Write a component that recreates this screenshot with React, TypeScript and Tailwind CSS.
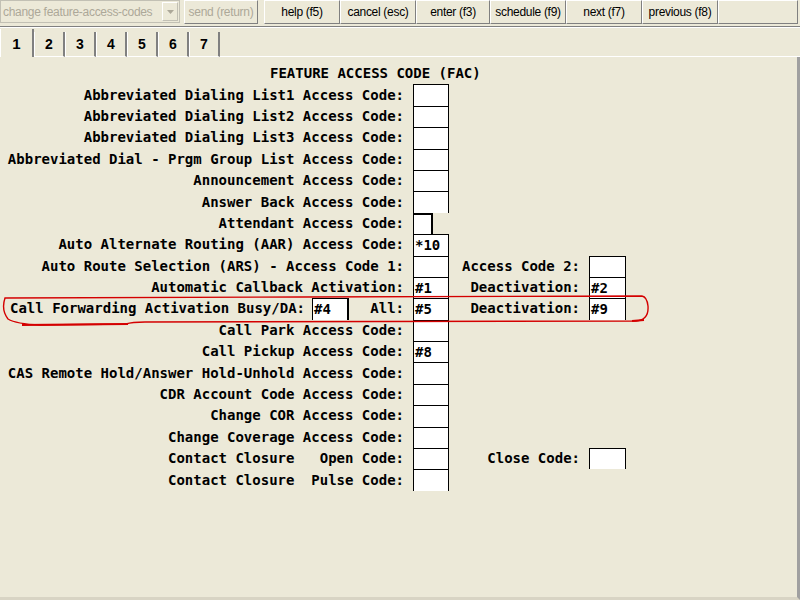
import React from 'react';

type Row = {
  label: string;
  value?: string;
  narrow?: boolean;
  label2?: string;
  value2?: string;
  split?: { left: string; leftValue: string; right: string };
};

const rows: Row[] = [
  { label: 'Abbreviated Dialing List1 Access Code:' },
  { label: 'Abbreviated Dialing List2 Access Code:' },
  { label: 'Abbreviated Dialing List3 Access Code:' },
  { label: 'Abbreviated Dial - Prgm Group List Access Code:' },
  { label: 'Announcement Access Code:' },
  { label: 'Answer Back Access Code:' },
  { label: 'Attendant Access Code:', narrow: true },
  { label: 'Auto Alternate Routing (AAR) Access Code:', value: '*10' },
  { label: 'Auto Route Selection (ARS) - Access Code 1:', label2: 'Access Code 2:', value2: '' },
  { label: 'Automatic Callback Activation:', value: '#1', label2: 'Deactivation:', value2: '#2' },
  {
    label: '',
    value: '#5',
    split: { left: 'Call Forwarding Activation Busy/DA:', leftValue: '#4', right: 'All:' },
    label2: 'Deactivation:',
    value2: '#9',
  },
  { label: 'Call Park Access Code:' },
  { label: 'Call Pickup Access Code:', value: '#8' },
  { label: 'CAS Remote Hold/Answer Hold-Unhold Access Code:' },
  { label: 'CDR Account Code Access Code:' },
  { label: 'Change COR Access Code:' },
  { label: 'Change Coverage Access Code:' },
  { label: 'Contact Closure   Open Code:', label2: 'Close Code:', value2: '' },
  { label: 'Contact Closure  Pulse Code:' },
];

const Field = ({ value = '', className = '' }: { value?: string; className?: string }) => (
  <div
    className={`h-full bg-white border-t border-l border-r border-black pl-[1px] leading-[20px] ${className}`}
  >
    {value}
  </div>
);

const Button = ({ label, w, disabled }: { label: string; w: string; disabled?: boolean }) => (
  <div
    className={`${w} h-[24px] flex items-center justify-center border-t border-l border-t-white border-l-white border-r border-b border-r-[#808080] border-b-[#808080] text-[12px] tracking-[-0.3px] ${
      disabled ? 'text-[#aca899]' : 'text-black'
    }`}
  >
    {label}
  </div>
);

export default function App() {
  return (
    <div
      className="relative w-[800px] h-[600px] bg-[#ece9d8] flex flex-col overflow-hidden"
      style={{ fontFamily: '"Liberation Sans", Arial, sans-serif' }}
    >
      {/* toolbar */}
      <div className="h-[27px] flex items-start border-b border-[#808080] shrink-0">
        <div className="w-[180px] h-[23px] flex items-center border border-[#c2c0b4] bg-[#ece9d8]">
          <span className="flex-1 pl-[2px] text-[12px] text-[#aca899] tracking-[-0.3px]">
            change feature-access-codes
          </span>
          <div className="w-[16px] h-[19px] mr-[1px] border border-t-white border-l-white border-r-[#c2c0b4] border-b-[#c2c0b4] flex items-center justify-center">
            <svg width="7" height="4" viewBox="0 0 7 4">
              <path d="M0 0 L7 0 L3.5 4 Z" fill="#aca899" />
            </svg>
          </div>
        </div>
        <div className="ml-[4px]">
          <Button label="send (return)" w="w-[74px]" disabled />
        </div>
        <div className="ml-[6px] flex">
          <Button label="help (f5)" w="w-[76px]" />
          <Button label="cancel (esc)" w="w-[76px]" />
          <Button label="enter (f3)" w="w-[74px]" />
          <Button label="schedule (f9)" w="w-[76px]" />
          <Button label="next (f7)" w="w-[76px]" />
          <Button label="previous (f8)" w="w-[76px]" />
          <Button label="" w="w-[80px]" />
        </div>
      </div>

      {/* tabs */}
      <div className="h-[30px] flex items-end shrink-0 border-t border-white">
        <div className="w-[34px] h-[28px] flex items-center justify-center border-l border-white border-r-2 border-r-[#808080] text-[15px] font-bold pt-[2px]">
          1
        </div>
        {['2', '3', '4', '5', '6', '7'].map((t) => (
          <div
            key={t}
            className="w-[31px] h-[25px] flex items-center justify-center border-l border-white border-r-2 border-r-[#808080] border-b border-b-white text-[14px] font-bold"
          >
            {t}
          </div>
        ))}
        <div className="flex-1 h-full border-b border-white" />
      </div>

      {/* form */}
      <div
        className="flex-1 pl-[9px] pt-[6px] text-[14px] font-bold text-black border-r-[3px] border-r-[#a0a0a0] border-b-[3px] border-b-[#d8d4c4] whitespace-pre"
        style={{ fontFamily: '"DejaVu Sans Mono", "Liberation Mono", monospace' }}
      >
        <div className="h-[21.4px] flex items-center pl-[261px]">FEATURE ACCESS CODE (FAC)</div>
        {rows.map((r, i) => (
          <div key={i} className="h-[21.4px] flex items-stretch">
            {r.split ? (
              <div className="w-[395px] flex items-stretch">
                <span className="pl-[1px] flex items-center">{r.split.left}</span>
                <div className="ml-[7px] w-[37px]">
                  <Field value={r.split.leftValue} className="border-r-2" />
                </div>
                <span className="flex-1 text-right flex items-center justify-end">{r.split.right}</span>
              </div>
            ) : (
              <div className="w-[395px] flex items-center justify-end">{r.label}</div>
            )}
            <div className={`ml-[9px] ${r.narrow ? 'w-[20px]' : 'w-[36px]'}`}>
              {r.narrow ? (
                <div className="h-full border-t-2 border-l border-r-2 border-black bg-white" />
              ) : (
                <Field value={r.value} />
              )}
            </div>
            {r.label2 !== undefined && (
              <>
                <div className="w-[131px] flex items-center justify-end">{r.label2}</div>
                <div className="ml-[9px] w-[37px]">
                  <Field value={r.value2} />
                </div>
              </>
            )}
          </div>
        ))}
      </div>

      {/* red hand-drawn annotation */}
      <svg className="absolute left-0 top-0 pointer-events-none" width="800" height="600">
        <path
          d="M642 296 L300 297 L5 298 Q1 310 8 319 Q16 324 40 325 L126 324 Q132 322 145 322 L636 321 Q649 320 648 306 Q647 297 642 296"
          fill="none"
          stroke="#d40000"
          strokeWidth="1.4"
        />
        <path d="M22 325 L128 324" stroke="#d40000" strokeWidth="2" />
        <path d="M632 321 L644 320" stroke="#d40000" strokeWidth="2" />
      </svg>
    </div>
  );
}
